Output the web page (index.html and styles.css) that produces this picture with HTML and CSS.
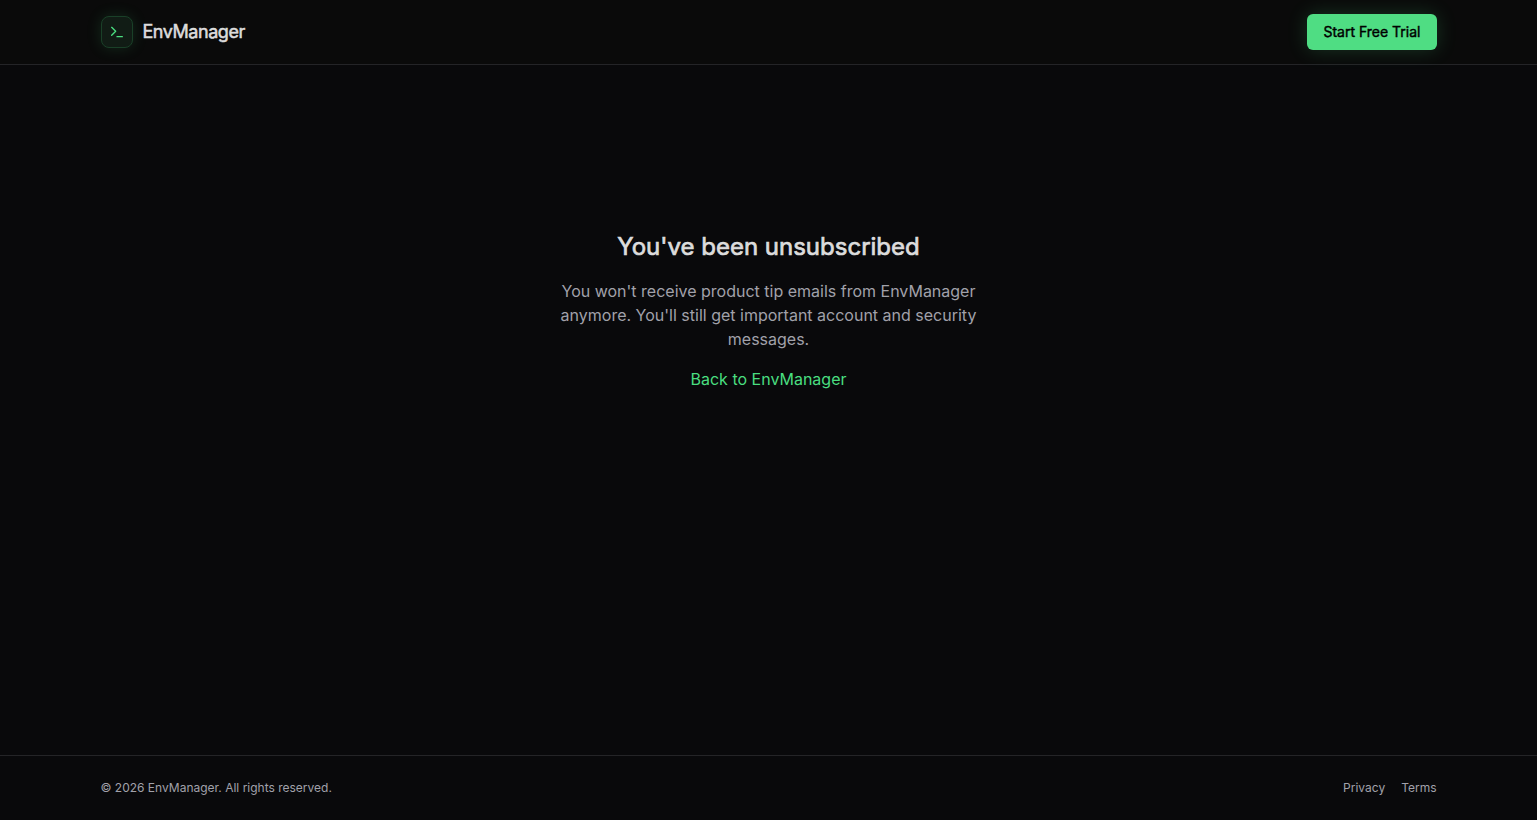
FILE: index.html
```html
<!DOCTYPE html>
<html lang="en">
<head>
    <meta charset="UTF-8">
    <meta name="viewport" content="width=device-width, initial-scale=1.0">
    <title>Unsubscribed - EnvManager</title>
    <link rel="stylesheet" href="styles.css">
</head>
<body>

    <!-- Header -->
    <header class="site-header">
        <div class="container header-row">
            <a href="/" class="brand">
                <span class="brand-icon">
                    <svg width="16" height="16" viewBox="0 0 24 24" fill="none" stroke="currentColor" stroke-width="2" stroke-linecap="round" stroke-linejoin="round" aria-hidden="true">
                        <path d="M12 19h8"></path>
                        <path d="m4 17 6-6-6-6"></path>
                    </svg>
                </span>
                <span class="brand-name">EnvManager</span>
            </a>
            <a href="/signup" class="trial-button">Start Free Trial</a>
        </div>
    </header>

    <main>
        <div class="message">
            <h1>You've been unsubscribed</h1>
            <p>You won't receive product tip emails from EnvManager anymore. You'll still get important account and security messages.</p>
            <a href="/" class="back-link">Back to EnvManager</a>
        </div>
    </main>

    <!-- Footer -->
    <footer class="site-footer">
        <div class="container footer-row">
            <p>© 2026 EnvManager. All rights reserved.</p>
            <nav class="footer-links">
                <a href="/privacy">Privacy</a>
                <a href="/terms">Terms</a>
            </nav>
        </div>
    </footer>

</body>
</html>
```

FILE: styles.css
```css
/* General Styles */
* {
    box-sizing: border-box;
    margin: 0;
    padding: 0;
}

body {
    font-family: Inter, sans-serif;
    font-size: 16px;
    line-height: 24px;
    min-height: 100vh;
    display: flex;
    flex-direction: column;
    background-color: #09090b;
    color: #dcdcdc;
}

a {
    color: inherit;
    text-decoration: none;
}

.container {
    width: 100%;
    max-width: 1400px;
    margin: 0 auto;
    padding: 0 32px;
    display: flex;
    align-items: center;
    justify-content: space-between;
}

/* Regular letters thickened with an outline */
h1,
.brand-name,
.trial-button {
    font-weight: 400;
    -webkit-text-stroke: 0.03em currentColor;
}

/* Header */
.site-header {
    background-color: #0a0a0a;
    border-bottom: 1px solid #242427;
}

.header-row {
    height: 64px;
}

.brand {
    display: flex;
    align-items: center;
    gap: 10px;
}

.brand-icon {
    display: flex;
    align-items: center;
    justify-content: center;
    width: 32px;
    height: 32px;
    border: 1px solid #1a4028;
    border-radius: 8px;
    background-color: #111c15;
    color: #4ade80;
    box-shadow: 0 0 15px rgba(74, 222, 128, 0.15);
}

.brand-name {
    font-size: 18px;
    line-height: 28px;
    letter-spacing: -0.025em;
}

.trial-button {
    padding: 8px 16px;
    border-radius: 6px;
    background-color: #4fdd83;
    color: #000;
    font-size: 14px;
    line-height: 20px;
    box-shadow: 0 0 20px rgba(74, 222, 128, 0.2);
}

.trial-button:hover {
    background-color: #4ade80;
}

/* Message */
main {
    flex: 1;
}

.message {
    max-width: 480px;
    min-height: 60vh;
    margin: 0 auto;
    padding: 0 24px;
    display: flex;
    flex-direction: column;
    align-items: center;
    justify-content: center;
    gap: 16px;
    text-align: center;
}

h1 {
    font-size: 24px;
    line-height: 32px;
}

.message p {
    color: #a1a1aa;
}

.back-link {
    color: #4ade80;
}

.back-link:hover {
    text-decoration: underline;
}

/* Footer */
.site-footer {
    border-top: 1px solid #242427;
    color: #a1a1aa;
    font-size: 12px;
    line-height: 16px;
}

.footer-row {
    padding-top: 24px;
    padding-bottom: 24px;
}

.footer-links {
    display: flex;
    gap: 16px;
}
```
